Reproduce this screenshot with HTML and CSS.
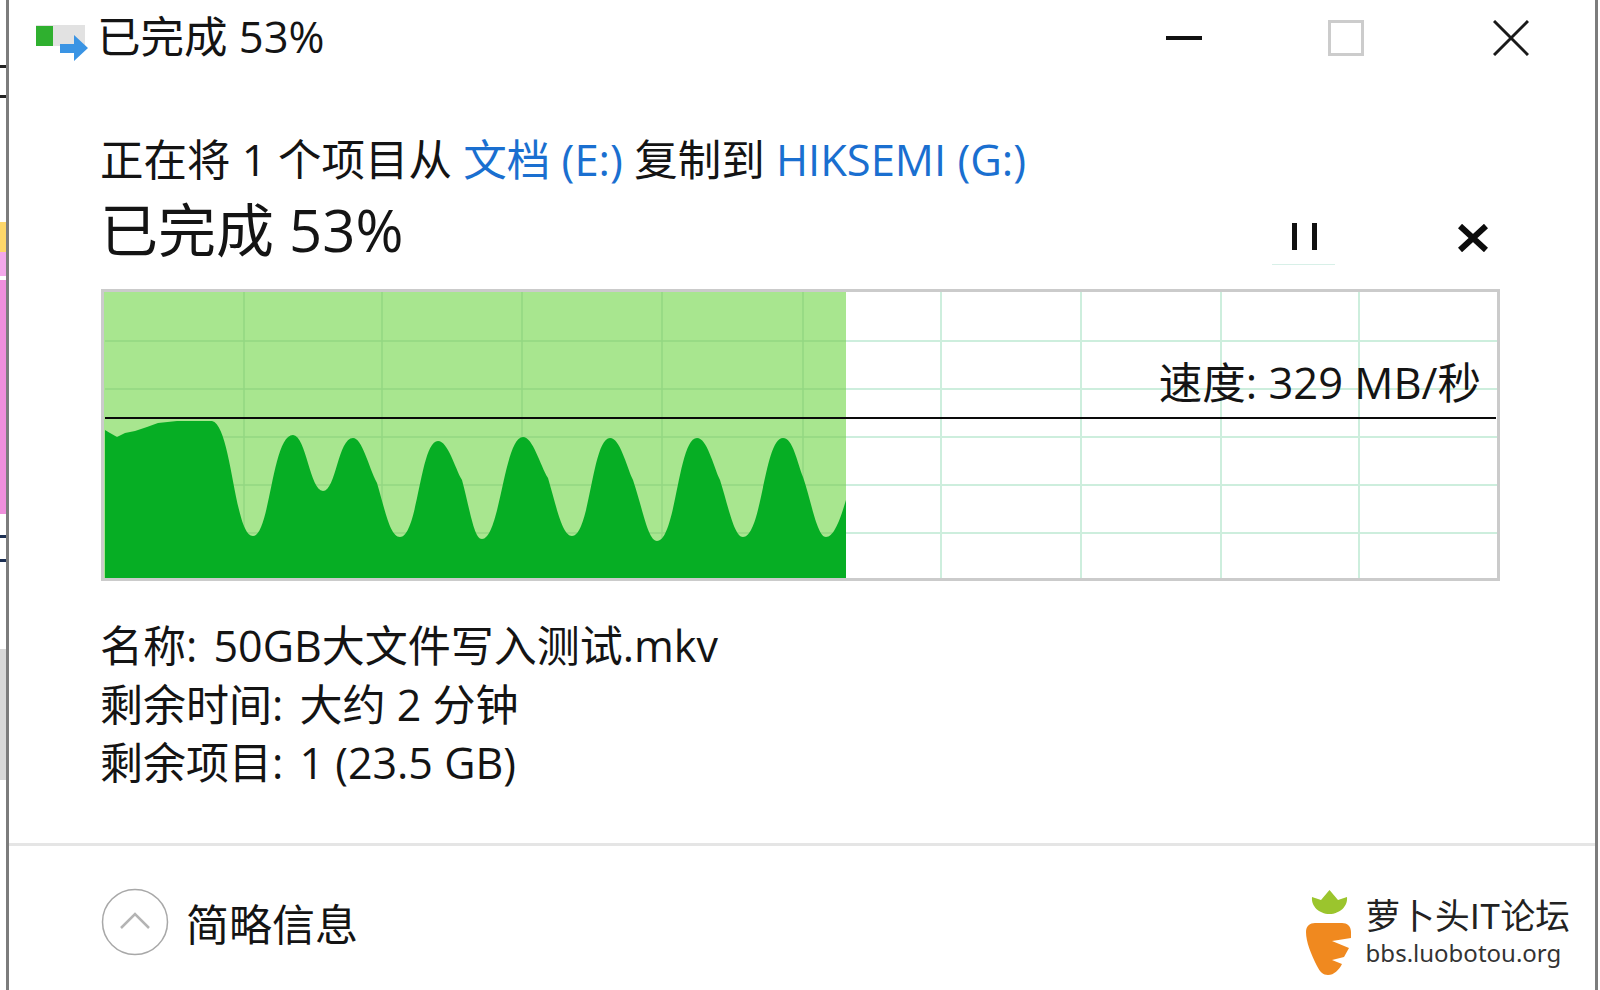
FILE: index.html
```html
<!DOCTYPE html>
<html lang="zh-CN">
<head>
  <meta charset="UTF-8" />
  <title>已完成 53%</title>
  <link rel="stylesheet" href="styles.css">
</head>
<body>
  <div class="desktop">
    <!-- bits of the desktop showing behind the window -->
    <div class="behind">
      <div class="behind-gap-a"></div>
      <div class="behind-glyph"></div>
      <div class="behind-gap-b"></div>
      <div class="behind-yellow"></div>
      <div class="behind-pink-light"></div>
      <div class="behind-pink"></div>
      <div class="behind-gap-c"></div>
      <div class="behind-glyph-low"></div>
      <div class="behind-gap-d"></div>
      <div class="behind-gray"></div>
    </div>

    <div class="window">
      <div class="titlebar">
        <svg class="app-icon" width="54" height="38" viewBox="0 0 54 38">
          <rect x="1" y="0" width="49" height="21" fill="#e2e2e2" />
          <rect x="1" y="1" width="17" height="20" fill="#2fb02f" />
          <path d="M25 19H39V10L53 23L39 36V28H25Z" fill="#3a94e4" />
        </svg>
        <span class="title">已完成 53%</span>
        <div class="controls">
          <svg class="ctl ctl-min" width="36" height="36" viewBox="0 0 36 36"><path d="M0 18H36" stroke="#111" stroke-width="4" /></svg>
          <svg class="ctl ctl-max" width="36" height="36" viewBox="0 0 36 36"><rect x="1.5" y="1.5" width="33" height="33" fill="none" stroke="#ccc" stroke-width="3" /></svg>
          <svg class="ctl" width="36" height="36" viewBox="0 0 36 36"><path d="M1 1L35 35M35 1L1 35" stroke="#1a1a1a" stroke-width="3" /></svg>
        </div>
      </div>

      <div class="content">
        <div class="copy-line">正在将 1 个项目从 <span class="link">文档 (E:)</span> 复制到 <span class="link">HIKSEMI (G:)</span></div>
        <div class="progress-row">
          <div class="progress-text">已完成 53%</div>
          <div class="progress-btns">
            <div class="pause-btn">
              <svg width="25" height="27" viewBox="0 0 25 27"><path d="M2.5 0V27M22.5 0V27" stroke="#111" stroke-width="5" /></svg>
            </div>
            <svg class="cancel-btn" width="30" height="28" viewBox="0 0 30 28"><path d="M2 2L28 26M28 2L2 26" stroke="#0c0c0c" stroke-width="6" /></svg>
          </div>
        </div>

        <div class="graph">
          <svg class="graph-svg" width="1393" height="286" viewBox="104 292 1393 286">
            <rect x="104" y="292" width="742" height="286" fill="#a8e68f" />
            <g class="grid-white">
              <path d="M941 292V578M1081 292V578M1221 292V578M1359 292V578" />
              <path d="M846 341H1497M846 389H1497M846 437H1497M846 485H1497M846 533H1497" />
            </g>
            <g class="grid-green">
              <path d="M244 292V578M382 292V578M522 292V578M662 292V578M803 292V578" />
              <path d="M105 341H846M105 389H846M105 437H846M105 485H846M105 533H846" />
            </g>
            <path class="area" d="M105 430L110 433L117 437L125 433L135 431L147 427L158 423L177 421L212 421C232 425 234 536 253 536C270 536 272 435 293 435C306 435 310 491 323 491C336 491 338 438 353 438C362 438 368 465 377 483C385 510 390 537 400 537C418 537 420 441 438 441C448 441 455 468 462 480C470 510 474 539 482 539C500 539 504 437 523 437C533 437 540 465 548 478C556 505 562 536 572 536C590 536 592 438 610 438C620 438 626 465 633 480C643 510 648 541 657 541C676 541 678 438 697 438C707 438 713 465 720 480C728 505 734 537 743 537C762 537 764 438 783 438C793 438 797 462 803 477C811 500 817 537 826 537C834 537 840 520 846 500V578H105Z" />
            <path d="M105 418H1496" stroke="#0a0a0a" stroke-width="2" />
          </svg>
          <div class="speed">速度: 329 MB/秒</div>
        </div>

        <div class="details">
          <div><span class="detail-label">名称:</span> 50GB大文件写入测试.mkv</div>
          <div><span class="detail-label">剩余时间:</span> 大约 2 分钟</div>
          <div><span class="detail-label">剩余项目:</span> 1 (23.5 GB)</div>
        </div>
      </div>

      <div class="footer">
        <svg class="expander" width="68" height="68" viewBox="0 0 68 68">
          <circle cx="34" cy="34" r="32.5" fill="none" stroke="#a8a8a8" stroke-width="1.5" />
          <path d="M20 40L34 26L48 40" fill="none" stroke="#b4b4b4" stroke-width="2.5" />
        </svg>
        <span class="expander-label">简略信息</span>

        <div class="watermark">
          <svg width="46" height="85" viewBox="0 0 46 85">
            <path d="M6 7L15 10L23.500 0L32 10L41 7C42 16 34 24 23.500 24C13 24 5 16 6 7Z" fill="#9bc52d" />
            <path d="M0 42C0 36 4 33 9 33H36C41 33 45 36 45 42V48L26 51L43 58L38 67L26 70L36 74C33 80 28 85 22 85C17 85 14 82 11 76C5 64 0 52 0 42Z" fill="#f0891f" />
          </svg>
          <div class="watermark-text">
            <div class="wm-name">萝卜头IT论坛</div>
            <div class="wm-url">bbs.luobotou.org</div>
          </div>
        </div>
      </div>
    </div>
  </div>
</body>
</html>
```
FILE: styles.css
```css
html, body {
  margin: 0;
  padding: 0;
  background: #fff;
}

body {
  font-family: "Open Sans", "Noto Sans CJK SC", sans-serif;
  color: #141414;
  overflow: hidden;
}

.desktop {
  display: flex;
  width: 1600px;
  height: 990px;
}

.behind {
  width: 6px;
  flex-shrink: 0;
  display: flex;
  flex-direction: column;
}

.behind-gap-a { height: 65px; }
.behind-glyph { height: 33px; border-top: 3px solid #222; border-bottom: 3px solid #222; box-sizing: border-box; }
.behind-gap-b { height: 124px; }
.behind-yellow { height: 30px; background: #fdd76a; }
.behind-pink-light { height: 24px; background: #f3a8ea; }
.behind-pink { height: 234px; margin-top: 4px; background: #f08fdc; }
.behind-gap-c { height: 21px; }
.behind-glyph-low { height: 27px; border-top: 3px solid #1c2f52; border-bottom: 3px solid #1c2f52; box-sizing: border-box; }
.behind-gap-d { height: 87px; }
.behind-gray { height: 131px; background: #d8d8d8; }

.window {
  width: 1592px;
  height: 990px;
  box-sizing: border-box;
  border-left: 3px solid #7c7c7c;
  border-right: 3px solid #7c7c7c;
  margin-right: 2px;
  display: flex;
  flex-direction: column;
  background: #fff;
}

.titlebar {
  height: 76px;
  display: flex;
  align-items: center;
  padding-left: 26px;
  flex-shrink: 0;
}

.app-icon {
  margin-top: 12px;
}

.title {
  font-size: 43.500px;
  line-height: 74px;
  margin-left: 8px;
  margin-bottom: 2px;
}

.controls {
  margin-left: auto;
  display: flex;
  padding-right: 66px;
}

.ctl-min {
  margin-right: 126px;
}

.ctl-max {
  margin-right: 129px;
}

.content {
  padding: 54px 95px 0 91px;
  flex: 1;
}

.copy-line {
  font-size: 43.500px;
  line-height: 60px;
  white-space: nowrap;
}

.link {
  color: #1a6fd0;
}

.progress-row {
  display: flex;
  justify-content: space-between;
  align-items: center;
  height: 72px;
  margin-top: 4px;
  margin-bottom: 23px;
}

.progress-text {
  font-size: 58px;
  line-height: 72px;
}

.progress-btns {
  display: flex;
  align-items: flex-start;
  padding-right: 12px;
  padding-top: 28px;
}

.pause-btn {
  width: 63px;
  height: 42px;
  box-sizing: border-box;
  padding-left: 20px;
  border-bottom: 1px solid #d8f0e8;
  margin-right: 123px;
}

.cancel-btn {
  margin-top: 1px;
}

.graph {
  position: relative;
  width: 1399px;
  height: 292px;
  margin-left: 1px;
  box-sizing: border-box;
  border: 3px solid #cbcbcb;
}

.graph-svg {
  display: block;
}

.grid-white path {
  fill: none;
  stroke: #cdeedd;
  stroke-width: 2;
}

.grid-green path {
  fill: none;
  stroke: #92d883;
  stroke-width: 1.5;
}

.area {
  fill: #06ae24;
}

.speed {
  position: absolute;
  right: 16px;
  top: 61px;
  font-size: 43.500px;
  line-height: 60px;
  white-space: nowrap;
}

.details {
  margin-top: 36px;
  font-size: 43px;
  line-height: 58.500px;
  white-space: nowrap;
}

.detail-label {
  margin-right: 5px;
}

.footer {
  height: 147px;
  flex-shrink: 0;
  box-sizing: border-box;
  border-top: 3px solid #e5e5e5;
  display: flex;
  align-items: center;
  padding: 8px 25px 0 92px;
}

.expander-label {
  font-size: 43px;
  margin-left: 17px;
}

.watermark {
  margin-left: auto;
  display: flex;
  align-items: flex-start;
  gap: 14px;
  padding-top: 21px;
}

.watermark-text {
  padding-top: 3px;
}

.wm-name {
  font-family: "Noto Sans CJK SC", sans-serif;
  font-size: 34.700px;
  line-height: 42px;
  color: #222;
}

.wm-url {
  font-family: "Noto Sans", sans-serif;
  font-size: 24px;
  line-height: 36px;
  color: #333;
}
```
